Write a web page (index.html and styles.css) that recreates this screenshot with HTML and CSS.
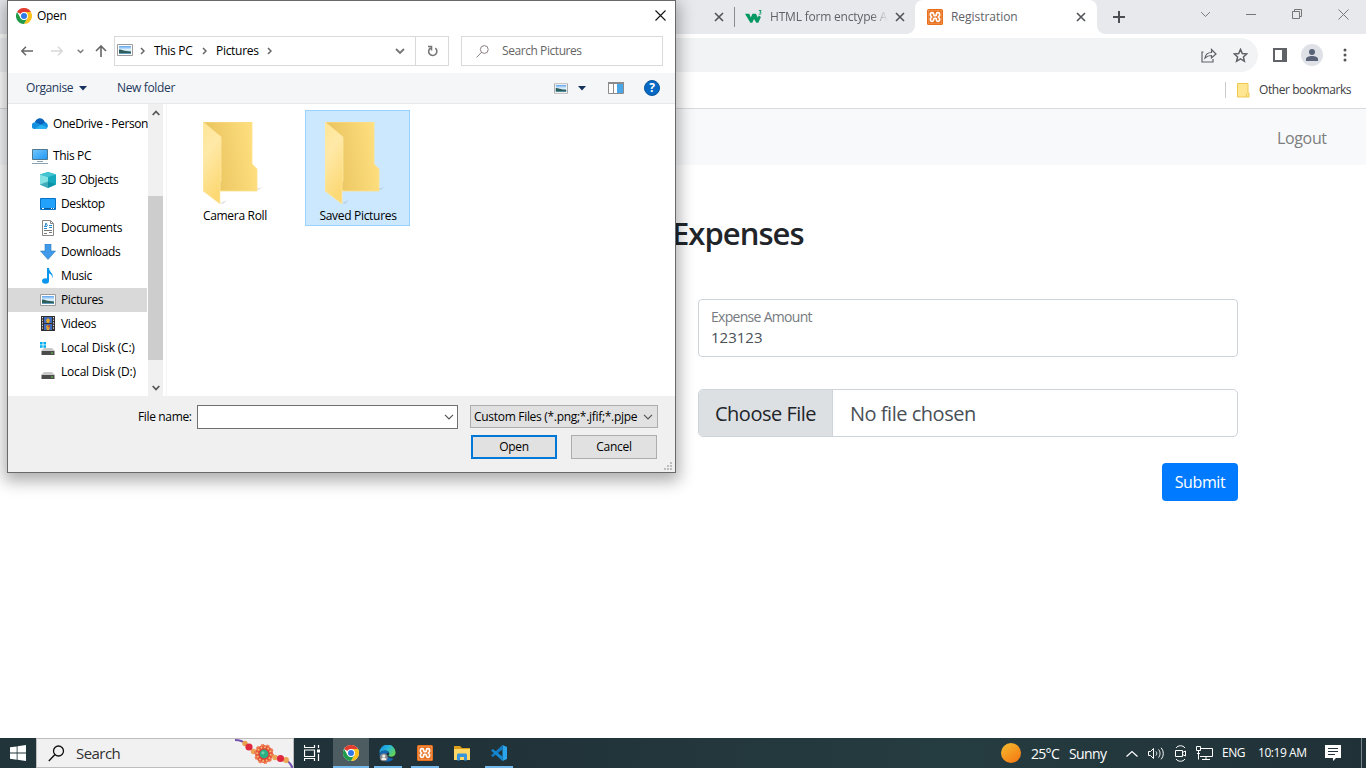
FILE: index.html
```html
<!DOCTYPE html>
<html lang="en">
<head>
<meta charset="utf-8">
<title>Registration</title>
<link rel="stylesheet" href="styles.css">
</head>
<body>
<svg class="defs" width="0" height="0">
  <defs>
    <linearGradient id="sky" x1="0" y1="0" x2="0" y2="1"><stop offset="0" stop-color="#5aa4ee"/><stop offset=".45" stop-color="#e4f1fd"/><stop offset=".7" stop-color="#b9dcf5"/><stop offset="1" stop-color="#4a86ad"/></linearGradient>
    <linearGradient id="fback" x1=".2" y1=".6" x2="1" y2=".45"><stop offset="0" stop-color="#ebc762"/><stop offset="1" stop-color="#ffdf80"/></linearGradient>
    <linearGradient id="ffront" x1="0" y1="0" x2=".3" y2="1"><stop offset="0" stop-color="#ffe596"/><stop offset=".4" stop-color="#ffe9a8"/><stop offset="1" stop-color="#fcd975"/></linearGradient>
    <linearGradient id="sun" x1="0" y1="0" x2=".7" y2="1"><stop offset="0" stop-color="#f6bd31"/><stop offset="1" stop-color="#f57c14"/></linearGradient>
    <linearGradient id="blue" x1="0" y1="0" x2="1" y2="1"><stop offset="0" stop-color="#74c8ff"/><stop offset="1" stop-color="#1c96f5"/></linearGradient>
    <linearGradient id="edge" x1="0" y1="0" x2="1" y2=".6"><stop offset="0" stop-color="#1688d8"/><stop offset=".5" stop-color="#27b4df"/><stop offset="1" stop-color="#62d45a"/></linearGradient>
  </defs>
  <symbol id="chrome" viewBox="0 0 16 16">
    <circle cx="8" cy="8" r="8" fill="#fff"/>
    <path d="M8 8 1.070 4A8 8 0 0 1 14.930 4H8z" fill="#e33b2e"/>
    <path d="M14.930 4A8 8 0 0 1 8 16l3.460-6L8 4z" fill="#fcc21b"/>
    <path d="M8 16A8 8 0 0 1 1.070 4L4.540 10 8 12l3.400-2z" fill="#229a4b"/>
    <circle cx="8" cy="8" r="3.900" fill="#fff"/><circle cx="8" cy="8" r="3" fill="#2f78e8"/>
  </symbol>
  <symbol id="picture" viewBox="0 0 16 12">
    <path d="M.5.5h15v11H.5z" fill="#fff" stroke="#9b9b9b"/><path d="M2 2h12v8H2z" fill="url(#sky)"/><path d="M2 5.500c3 0 5 1.800 12 2V9H2z" fill="#2e5e59"/>
  </symbol>
  <symbol id="xampp" viewBox="0 0 16 16">
    <rect width="16" height="16" rx="1.500" fill="#e8701d"/>
    <rect x="1.300" y="1.300" width="13.400" height="13.400" fill="none" stroke="#f19a5c" stroke-width=".6"/>
    <path d="M6.600 5.600V5a1.300 1.300 0 0 0-1.300-1.300h-.6A1.300 1.300 0 0 0 3.400 5v1.400L4.600 8 3.400 9.600V11a1.300 1.300 0 0 0 1.300 1.300h.6A1.300 1.300 0 0 0 6.600 11v-1l.6-.6h1.600l.6.6v1a1.300 1.300 0 0 0 1.300 1.300h.6a1.300 1.300 0 0 0 1.300-1.300V9.600L11.400 8l1.200-1.600V5a1.300 1.300 0 0 0-1.300-1.300h-.6A1.300 1.300 0 0 0 9.400 5v1l-.6.600H7.200z" fill="none" stroke="#fff" stroke-width="1.700"/>
  </symbol>
  <symbol id="folder" viewBox="0 0 60 84">
    <path d="M52 67 60 65 53 69zM17 81l7-3-4 4z" fill="#8a8a8a" opacity=".25"/>
    <path d="M0 0h49v42l5 5v22H17L0 1z" fill="url(#fback)" stroke="#ffe28b" stroke-width=".8"/>
    <path d="M0 0 18 15v43l-1 3v21L0 69z" fill="url(#ffront)" stroke="#ffe9a8" stroke-width=".7"/>
  </symbol>
  <symbol id="disk" viewBox="0 0 16 16">
    <path d="M4 8h8l3 3H1z" fill="#c9c9c9"/><path d="M1.500 11h13v4h-13z" fill="#4b4b4b"/><path d="M11 13h2" stroke="#65d94a"/>
  </symbol>
  <symbol id="x" viewBox="0 0 10 10"><path d="m1 1 8 8M9 1 1 9" fill="none" stroke="currentColor" stroke-width="1.600"/></symbol>
  <symbol id="down" viewBox="0 0 10 6"><path d="m1 .8 4 4 4-4" fill="none" stroke="currentColor" stroke-width="var(--w,1.2)"/></symbol>
  <symbol id="right" viewBox="0 0 5 8"><path d="m1 1 3 3-3 3" fill="none" stroke="#666" stroke-width="1.500"/></symbol>
</svg>

<div class="desktop">
  <div class="browser">
    <header class="tabstrip">
      <div class="tab tab-first"><svg class="tab-x"><use href="#x"/></svg></div>
      <div class="tab tab-w3">
        <svg class="w3-icon" viewBox="0 0 16 16"><path d="M0 4.500h4l1.500 3.500L7 4.500h3.300L12 8l1-2 2 1.500-2.500 5.500h-1.800L8.500 9.500 6.800 13H5z" fill="#059862"/><path d="M13 1.500h2.200L14 3c2 .2 1.300 2.600-1 1.700" fill="none" stroke="#059862" stroke-width=".9"/></svg>
        <span class="tab-title fade">HTML form enctype A</span><svg class="tab-x"><use href="#x"/></svg>
      </div>
      <div class="tab tab-active"><svg class="tab-icon"><use href="#xampp"/></svg><span class="tab-title">Registration</span><svg class="tab-x"><use href="#x"/></svg></div>
      <div class="newtab"><svg width="12" height="12"><path d="M6 0v12M0 6h12" stroke="#4b4e52" stroke-width="2"/></svg></div>
      <div class="controls">
        <span><svg width="11" height="7" viewBox="0 0 10 6"><use href="#down"/></svg></span>
        <span><svg width="10" height="10"><path d="M0 5.500h10" stroke="#777"/></svg></span>
        <span><svg width="11" height="11"><path d="M.5 2.500h7v7h-7zM2.500 2.500v-2h7v7h-2" fill="none" stroke="#777"/></svg></span>
        <span><svg width="11" height="11" viewBox="0 0 11 11"><path d="m.5.5 10 10M10.500.5l-10 10" stroke="#777"/></svg></span>
      </div>
    </header>
    <div class="toolbar">
      <div class="omnibox">
        <svg width="16" height="15" viewBox="0 0 16 15"><path d="M2.500 4H1v10h11v-3M4 10c.5-3.500 3-5.500 6.500-5.500V1.500L15 6l-4.500 4V7.500C8 7.500 6 8 4 10z" fill="none" stroke="#5f6368" stroke-width="1.200"/></svg>
        <svg width="15" height="15" viewBox="0 0 15 15"><path d="m7.500 1.400 1.800 4.100 4.500.4-3.400 3 1 4.400-3.900-2.400-3.900 2.400 1-4.400-3.400-3 4.500-.4z" fill="none" stroke="#5f6368" stroke-width="1.500"/></svg>
      </div>
      <svg class="panel" width="14" height="14"><path d="M1 1h12v12H1z" fill="#fff" stroke="#5f6368" stroke-width="2"/><path d="M9 0h5v14H9z" fill="#5f6368"/></svg>
      <svg class="avatar" width="22" height="22"><circle cx="11" cy="11" r="11" fill="#dee1e6"/><circle cx="11" cy="8" r="3" fill="#5a6377"/><path d="M5 17v-2c0-4 12-4 12 0v2z" fill="#5a6377"/></svg>
      <svg class="dots" width="4" height="14"><circle cx="2" cy="2" r="1.500" fill="#555"/><circle cx="2" cy="7" r="1.500" fill="#555"/><circle cx="2" cy="12" r="1.500" fill="#555"/></svg>
    </div>
    <div class="bookmarks">
      <svg width="13" height="15"><path d="M.5.5h10.500v9.500h1v4H.5z" fill="#ffe693" stroke="#efc94e"/><path d="M9.500 14v-3.500" stroke="#efc94e"/></svg><span>Other bookmarks</span>
    </div>
    <main class="page">
      <nav class="nav"><span>Logout</span></nav>
      <h1>Expenses</h1>
      <form class="form">
        <div class="amount"><label>Expense Amount</label><span>123123</span></div>
        <div class="file"><span class="choose">Choose File</span><span class="nofile">No file chosen</span></div>
        <button class="submit" type="button"><span>Submit</span></button>
      </form>
    </main>
  </div>

  <footer class="taskbar">
    <div class="start"><svg width="16" height="16"><path d="m0 2.300 6.700-.9v6.200H0zm7.500-1L16 0v7.600H7.500zM0 8.400h6.700v6.300L0 13.700zm7.500 0H16V16l-8.500-1.200z" fill="#fff"/></svg></div>
    <div class="tasksearch">
      <svg width="17" height="17" viewBox="0 0 17 17"><circle cx="10.500" cy="6" r="5" fill="none" stroke="#111" stroke-width="1.300"/><path d="M7 9.500.8 16" stroke="#111" stroke-width="1.400"/></svg>
      <span class="searchlabel">Search</span>
      <svg class="rakhi" width="58" height="29" viewBox="0 0 58 29"><path d="M0 1c5 0 8 1 11 4M50 21c4 1 6 4 7.500 8" fill="none" stroke="#7653ae" stroke-width="2"/><circle cx="10" cy="4.500" r="2.700" fill="#e8a04e"/><circle cx="18.500" cy="12.500" r="2.700" fill="#eba553"/><circle cx="14" cy="8" r="3.600" fill="#e0283f"/><circle cx="29" cy="15" r="9" fill="#e8573e"/><circle cx="29" cy="15" r="9" fill="none" stroke="#ef7b50" stroke-width="2" stroke-dasharray="3 2.600"/><circle cx="29" cy="15" r="6.800" fill="none" stroke="#f4c06e" stroke-width="1.800" stroke-dasharray="1.600 1.950"/><circle cx="29" cy="15" r="5.500" fill="#dc3e38"/><circle cx="29" cy="15" r="4.400" fill="#2aae84"/><circle cx="28" cy="13.800" r="1.600" fill="#6ed2ab"/><circle cx="40" cy="18.500" r="2.700" fill="#eba553"/><circle cx="51" cy="21" r="2.900" fill="#eba553"/><circle cx="45.500" cy="19.500" r="3.600" fill="#e0283f"/></svg>
    </div>
    <div class="task plain"><svg width="17" height="16" viewBox="0 0 17 16"><path d="M.5 0v2.500h10V0M.5 5h10v6.500H.5zM.5 16v-2.500h10V16M14.500 0v3M14.500 9v7" fill="none" stroke="#fff" stroke-width="1.200"/><path d="M13 4.500h3v3h-3z" fill="#fff"/></svg></div>
    <div class="task active"><svg class="i16"><use href="#chrome"/></svg></div>
    <div class="task open"><svg width="17" height="17" viewBox="0 0 17 17"><path d="M.5 8A8 8 0 0 1 16.500 7c.5 4-3.500 5.500-6.500 4.300-1.500-.8.500-1.300.3-3C10 5 4 4 .5 8z" fill="url(#edge)"/><path d="M.5 8.500C3 4.500 8.500 4.500 10.300 7.800 6 7 5.500 13 14.500 13.700 10 19 0 17 .5 8.500z" fill="#1467b3"/><circle cx="4.800" cy="12.300" r="3.900" fill="#8b8b8b"/><circle cx="4.800" cy="11" r="1.600" fill="#eee"/><path d="M2.300 15c0-3.200 5-3.200 5 0z" fill="#eee"/></svg></div>
    <div class="task open"><svg class="i16"><use href="#xampp"/></svg></div>
    <div class="task"><svg width="16" height="15"><path d="M0 0h6l2 2h8v4H0z" fill="#dc9d1a"/><path d="M0 3h16v11H0z" fill="#ffd766"/><path d="M3 14.500V8.500l1-1h8l1 1v6h-3V11H6v3.500z" fill="#3794dd"/></svg></div>
    <div class="task open"><svg width="16" height="16" viewBox="0 0 16 16"><path d="m11.500 0 4.500 2v12l-4.500 2z" fill="#2aa5ed"/><path d="M11.500 0v4.500L1.800 12 0 10.500z" fill="#127bc1"/><path d="m0 5.500 1.800-1.500 9.700 7.500V16z" fill="#1688d1"/></svg></div>
    <div class="tray">
      <svg class="sun" width="20" height="20"><circle cx="10" cy="10" r="10" fill="url(#sun)"/></svg>
      <span class="temp">25°C</span><span class="sunny">Sunny</span>
      <svg class="chev" width="12" height="7" viewBox="0 0 12 7"><path d="m.5 6.500 5.500-5 5.500 5" fill="none" stroke="#fff" stroke-width="1.200"/></svg>
      <svg class="vol" width="17" height="13" viewBox="0 0 17 13"><path d="M.5 4.500h2l3-3v10l-3-3h-2zM8 4.500c1 1 1 3 0 4M10.500 2.500c2 2 2 6 0 8M13 .8c3 3 3 8.500 0 11.500" fill="none" stroke="#fff"/></svg>
      <svg class="cam" width="12" height="17" viewBox="0 0 12 17"><path d="M1 3c2-3 7-3 9 0M1 14c2 3 7 3 9 0M.5 5.500h7v6h-7zM7.500 7.500l3-1.500v5l-3-1.500" fill="none" stroke="#fff"/></svg>
      <svg class="net" width="17" height="14" viewBox="0 0 17 14"><path d="M5 2.500h11.500v8H4M10 10.500v3M6 13.500h8M.5.5h4v4h-4zM2.500 4.500v9M1 7.500h3" fill="none" stroke="#fff"/></svg>
      <span class="lang">ENG</span><span class="clock">10:19 AM</span>
      <svg class="note" width="16" height="16"><path d="M0 0h16v13h-5l-3 3v-3H0z" fill="#fff"/><path d="M3 3.500h10M3 6.500h10M3 9.500h7" stroke="#21323a"/></svg>
      <i class="peek"></i>
    </div>
  </footer>

  <section class="dialog">
    <div class="titlebar"><svg class="i16"><use href="#chrome"/></svg><span>Open</span><svg class="close" width="11" height="11"><path d="m.5.5 10 10M10.500.5l-10 10" stroke="#111" stroke-width="1.100"/></svg></div>
    <div class="address">
      <div class="arrows">
        <svg width="12" height="10" viewBox="0 0 12 10"><path d="M12 5H1M5 .8.800 5 5 9.200" fill="none" stroke="#666" stroke-width="1.500"/></svg>
        <svg width="12" height="10" viewBox="0 0 12 10"><path d="M0 5h11M7 .8 11.200 5 7 9.200" fill="none" stroke="#d8d8d8" stroke-width="1.500"/></svg>
        <svg width="7" height="5" viewBox="0 0 7 5"><path d="m.7.8 2.800 2.700L6.300.8" fill="none" stroke="#777" stroke-width="1.400"/></svg>
        <svg width="12" height="12" viewBox="0 0 12 12"><path d="M6 12V1M1 6l5-5 5 5" fill="none" stroke="#666" stroke-width="1.600"/></svg>
      </div>
      <div class="crumbs">
        <svg class="crumbpic" width="16" height="12"><use href="#picture"/></svg><svg class="sep"><use href="#right"/></svg><span class="c1">This PC</span><svg class="sep"><use href="#right"/></svg><span class="c2">Pictures</span><svg class="sep"><use href="#right"/></svg>
        <svg class="drop" width="10" height="7" viewBox="0 0 10 7"><path d="m1 1 4 4 4-4" fill="none" stroke="#777" stroke-width="1.900"/></svg>
        <div class="refresh"><svg width="11" height="12" viewBox="0 0 11 12"><path d="M8.300 3.200A4.100 4.100 0 1 1 3.500 3M1 1.500h3.500V5.500" fill="none" stroke="#777" stroke-width="1.600"/></svg></div>
      </div>
      <div class="find"><svg width="13" height="13" viewBox="0 0 13 13"><circle cx="8.300" cy="4.500" r="3.900" fill="none" stroke="#8c8083"/><path d="m5.500 7.300-5 5.200" stroke="#8c8083"/></svg><span>Search Pictures</span></div>
    </div>
    <div class="commands">
      <span class="organise">Organise</span><svg class="tri" width="8" height="5"><path d="M0 0h8L4 4.500z" fill="#16325c"/></svg><span class="newfolder">New folder</span>
      <svg class="view" width="14" height="11" viewBox="0 0 16 12"><use href="#picture"/></svg><svg class="tri2" width="8" height="5"><path d="M0 0h8L4 4.500z" fill="#16325c"/></svg>
      <svg class="preview" width="16" height="12"><path d="M.5.5h15v11H.5zM5.500 2v9" fill="#fff" stroke="#8b8b8b"/><path d="M0 0h16v2H0z" fill="#8b8b8b"/><path d="M9 2h6v9H9z" fill="#49a6e8"/></svg>
      <span class="help"><b>?</b></span>
    </div>
    <div class="content">
      <div class="tree">
        <div class="item top"><svg width="16" height="16"><path d="M2 14a3.500 3.500 0 0 1 1-6.800C5 3 10 2 12 7c5 0 5 7 1 7z" fill="#1490df"/><path d="M3 7c2-5 8-5 10 .3L9 10 4.500 7.500z" fill="#0b62ba"/><path d="m3 14 6-4.500 6 3c-.5 1-1 1.500-2 1.500z" fill="#2bb2f2"/></svg><span>OneDrive - Person</span></div>
        <div class="item pc"><svg width="16" height="16"><path d="M.5 1.500h15v10H.5z" fill="url(#blue)" stroke="#51788e"/><path d="M5 13.500h6M0 15.500h16" stroke="#8aa1ae"/></svg><span>This PC</span></div>
        <div class="item"><svg width="16" height="16"><path d="m8 0 8 2.500v10L8 16l-8-3.500v-10z" fill="#16a9bd"/><path d="M0 2.500 8 5v11l-8-3.500z" fill="#85e2e4"/><path d="m0 2.500 8-2.500 8 2.500L8 5z" fill="#42c5d2"/><path d="m0 12.500 8-3 8 3L8 16z" fill="#087d96" opacity=".55"/></svg><span>3D Objects</span></div>
        <div class="item"><svg width="16" height="16"><path d="M.5 2.500h15v11H.5z" fill="#22a2fa" stroke="#0873c4"/><path d="M1 12.500h14" stroke="#075c9e"/><path d="M2 12.500h2M11 12.500h1M13 12.500h1" stroke="#fff"/></svg><span>Desktop</span></div>
        <div class="item"><svg width="16" height="16"><path d="M2.500.5h8l3 3v12h-11z" fill="#fff" stroke="#888"/><path d="M10.500.5v3h3" fill="none" stroke="#888"/><path d="M4 6.500h3M9 5.500h3M4 8.500h3M9 7.500h3" stroke="#278bd0"/><path d="m5 6 1-3 1.500 3" fill="none" stroke="#278bd0"/><path d="M4 10.500h8M4 13.500h3M9 12.500h3" stroke="#777"/></svg><span>Documents</span></div>
        <div class="item"><svg width="16" height="16"><path d="M5 0h6v7h4.500L8 15.500.5 7H5z" fill="#3f9bea" stroke="#2f78bb" stroke-width=".6"/></svg><span>Downloads</span></div>
        <div class="item"><svg width="16" height="16"><ellipse cx="5.500" cy="13" rx="3.500" ry="2.700" fill="#0a95ef"/><path d="M7 0h2c0 4 5 5 3.500 10.500C12 7 11 6 9 5.500V13H7z" fill="#0a95ef"/></svg><span>Music</span></div>
        <div class="item selected"><svg width="16" height="12"><use href="#picture"/></svg><span>Pictures</span></div>
        <div class="item"><svg width="16" height="16"><path d="M1 0h14v15H1z" fill="#303030"/><path d="M4 1h8v6H4z" fill="#426abd"/><path d="M4 8h8v6H4z" fill="#426abd"/><path d="m6 4 2-2 2 2-1 3H7zM6 10l2-1 2 2-1 3H7z" fill="#e6a82c"/><path d="m7 10 3-1v3z" fill="#b14e35"/><path d="M2.500 1v13M13.500 1v13" stroke="#e0e0e0" stroke-dasharray="1.300 1.300"/></svg><span>Videos</span></div>
        <div class="item disk"><svg width="16" height="16"><use href="#disk"/><path d="M0 2h2.600v2.500H0zm3.400 0h2.600v2.500H3.400zM0 5.300h2.600v2.500H0zm3.400 0h2.600v2.500H3.400z" fill="#00adef"/></svg><span>Local Disk (C:)</span></div>
        <div class="item disk"><svg width="16" height="16"><use href="#disk"/></svg><span>Local Disk (D:)</span></div>
      </div>
      <div class="scroll"><svg width="8" height="6" viewBox="0 0 8 6"><path d="m.7 5 3.300-3.500L7.300 5" fill="none" stroke="#555" stroke-width="1.800"/></svg><i class="thumb"></i><svg width="8" height="6" viewBox="0 0 8 6"><path d="m.7 1 3.300 3.500L7.300 1" fill="none" stroke="#555" stroke-width="1.800"/></svg></div>
      <div class="files">
        <div class="tile"><svg width="60" height="84"><use href="#folder"/></svg><span>Camera Roll</span></div>
        <div class="tile chosen"><svg width="60" height="84"><use href="#folder"/></svg><span>Saved Pictures</span></div>
      </div>
    </div>
    <div class="bottom">
      <div class="namerow"><span class="fname">File name:</span><div class="nameinput"><svg width="10" height="6"><use href="#down"/></svg></div><div class="type"><span>Custom Files (*.png;*.jfif;*.pjpe</span><svg width="10" height="6"><use href="#down"/></svg></div></div>
      <div class="buttons"><div class="btn primary"><span>Open</span></div><div class="btn"><span>Cancel</span></div></div>
      <svg class="grip" width="8" height="8"><path d="M6 0h2v2H6zM3 3h2v2H3zM6 3h2v2H6zM0 6h2v2H0zM3 6h2v2H3zM6 6h2v2H6z" fill="#bdbdbd"/></svg>
    </div>
  </section>
</div>
</body>
</html>
```
FILE: styles.css
```css
* { box-sizing: border-box; }
body { margin: 0; overflow: hidden; font-family: "Open Sans", "Noto Sans", sans-serif; font-size: 12px; color: #000; }
svg { display: block; flex: none; }
span { white-space: nowrap; }
.defs { position: absolute; }
.i16 { width: 16px; height: 16px; }
.desktop { position: relative; width: 1366px; height: 768px; display: flex; flex-direction: column; }
.browser { height: 738px; display: flex; flex-direction: column; background: #fff; }

/* Browser frame */
.tabstrip { height: 34px; background: #e8e9ed; display: flex; justify-content: flex-end; color: #5f6368; }
.tab { height: 34px; display: flex; align-items: center; }
.tab .tab-x { width: 10px; height: 10px; color: #505357; }
.tab-first { width: 179px; justify-content: flex-end; padding-right: 10px; }
.tab-w3 { width: 181px; padding-left: 11px; position: relative; }
.tab-w3::before { content: ""; position: absolute; left: 0; top: 7px; width: 1px; height: 20px; background: #888b90; }
.w3-icon { width: 17px; height: 17px; margin-right: 8px; }
.tab-title { width: 118px; letter-spacing: -.04px; padding-bottom: 1px; }
.fade { mask-image: linear-gradient(90deg, #000 86%, transparent); margin-right: 7px; letter-spacing: -.2px; }
.tab-active { width: 182px; background: #fff; border-radius: 8px 8px 0 0; padding-left: 12px; position: relative; }
.tab-active::before, .tab-active::after { content: ""; position: absolute; bottom: 0; width: 8px; height: 8px; }
.tab-active::before { left: -8px; background: radial-gradient(circle at 0 0, transparent 7.5px, #fff 8px); }
.tab-active::after { right: -8px; background: radial-gradient(circle at 100% 0, transparent 7.5px, #fff 8px); }
.tab-icon { width: 16px; height: 16px; margin-right: 8px; }
.tab-active .tab-title { width: 125px; }
.newtab { width: 85px; display: flex; align-items: center; padding-left: 16px; }
.controls { display: flex; color: #777; height: 28px; }
.controls span { width: 46px; display: grid; place-items: center; --w: .9; }
.toolbar { height: 38px; display: flex; align-items: center; padding-top: 4px; }
.omnibox { width: 1258px; height: 34px; background: #f1f3f4; border-radius: 0 17px 17px 0; display: flex; align-items: center; justify-content: flex-end; gap: 16px; padding-right: 10px; }
.panel { margin-left: 15px; }
.avatar { margin-left: 14px; }
.dots { margin-left: 19.5px; }
.bookmarks { height: 37px; border-bottom: 1px solid #d9dbdf; display: flex; align-items: center; justify-content: flex-end; color: #3c4043; padding-right: 14px; }
.bookmarks svg { margin-right: 9px; }
.bookmarks::before { content: ""; width: 1px; height: 16px; margin-right: 11px; background: #c8cacd; }
.bookmarks span { width: 93px; letter-spacing: -.43px; padding-bottom: 1px; }

/* Web page */
.page { display: flex; flex-direction: column; }
.nav { height: 56px; background: #f8f9fb; display: flex; align-items: center; justify-content: flex-end; padding-right: 39px; font-size: 16px; color: #7c7d7f; }
.nav span { width: 50px; letter-spacing: -.35px; padding-top: 1px; }
h1 { margin: 45px 0 0 672px; font-size: 31px; font-weight: 600; line-height: 46px; letter-spacing: -.97px; color: #212529; }
.form { margin: 43px 128px 0 698px; display: flex; flex-direction: column; }
.amount { height: 58px; border: 1px solid #ced4da; border-radius: 4px; padding: 7px 12px; display: flex; flex-direction: column; color: #495057; font-size: 15px; }
.amount label { font-size: 14px; line-height: 19px; letter-spacing: -.7px; color: #777b80; }
.amount span { line-height: 22px; letter-spacing: 0; }
.file { margin-top: 32px; height: 48px; border: 1px solid #ced4da; border-radius: 5px; display: flex; align-items: center; overflow: hidden; font-size: 20px; }
.choose { width: 134px; height: 46px; line-height: 47px; background: #dde0e3; border-right: 1px solid #ced4da; padding-left: 16px; color: #212529; letter-spacing: -.5px; }
.nofile { margin-left: 17px; color: #495057; letter-spacing: -.48px; }
.submit { align-self: flex-end; margin-top: 26px; width: 76px; height: 38px; border: 0; border-radius: 4px; background: #007bff; color: #fff; font: 16px "Open Sans", sans-serif; padding: 0; letter-spacing: -.4px; }

/* File dialog */
.dialog { position: absolute; left: 7px; top: 0; width: 669px; height: 473px; background: #fff; border: 1px solid #696969; box-shadow: 0 5px 15px 3px rgba(0,0,0,.32); display: flex; flex-direction: column; letter-spacing: -.3px; }
.titlebar { height: 30px; display: flex; align-items: center; padding: 0 9px 1px 8px; }
.titlebar span { margin-left: 5px; }
.close { margin-left: auto; }
.address { height: 42px; display: flex; align-items: center; padding: 5px 12px 7px 0; }
.arrows { width: 106px; display: flex; align-items: center; padding-left: 13px; }
.arrows svg:nth-child(2) { margin-left: 18px; }
.arrows svg:nth-child(3) { margin-left: 14px; }
.arrows svg:nth-child(4) { margin-left: 11px; }
.crumbs { width: 335px; height: 30px; border: 1px solid #d9d9d9; display: flex; align-items: center; padding-left: 2px; }
.crumbs span, .find span { padding-bottom: 1px; }
.crumbpic { margin-bottom: 2px; }
.sep { width: 5px; height: 8px; margin: 0 9px 0 7px; }
.c1 { width: 39px; } .c2 { width: 43px; }
.c1 + .sep { margin-left: 9px; margin-right: 9px; }
.c2 + .sep { margin-left: 8px; }
.drop { margin-left: auto; }
.refresh { width: 33px; height: 28px; margin-left: 10px; border-left: 1px solid #d9d9d9; display: grid; place-items: center; }
.find { width: 202px; height: 30px; margin-left: 12px; border: 1px solid #d9d9d9; display: flex; align-items: center; padding-left: 14px; color: #666; }
.find span { margin-left: 13px; letter-spacing: -.43px; }
.commands { height: 31px; background: #f5f6f8; border-bottom: 1px solid #e7e9ec; display: flex; align-items: center; padding-left: 18px; color: #1e395b; }
.organise { width: 48px; padding-bottom: 1px; letter-spacing: -.4px; } .tri { margin-left: 5px; }
.newfolder { width: 58px; margin-left: 30px; letter-spacing: -.35px; padding-bottom: 1px; }
.view { margin-left: 379px; } .tri2 { margin-left: 10px; } .preview { margin-left: 22px; }
.help { width: 16px; height: 16px; border-radius: 50%; margin-left: 20px; background: #0869c4; border: 1px solid #07559b; color: #fff; display: grid; place-items: center; line-height: 14px; font-size: 12px; letter-spacing: 0; }
.content { height: 292px; display: flex; }
.tree { width: 139px; padding-top: 8px; }
.item { height: 24px; display: flex; align-items: center; padding-left: 32px; gap: 5px; }
.item span { letter-spacing: -.35px; padding-bottom: 1px; }
.top, .pc { padding-left: 24px; } .pc { margin-top: 8px; }
.top svg { margin-bottom: 2px; }
.top span { letter-spacing: -.42px; }
.disk span { letter-spacing: -.2px; }
.selected { background: #d9d9d9; }
.scroll { width: 15px; margin-left: 1px; background: #f0f0f0; display: flex; flex-direction: column; align-items: center; padding: 6px 0 5px; }
.thumb { width: 15px; height: 164px; background: #cdcdcd; margin: 80px 0 25px; }
.files { flex: 1; margin-left: 3px; border-left: 1px solid #f5f5f5; display: flex; padding: 6px 0 0 15px; gap: 17px; }
.tile { width: 105px; height: 116px; border: 1px solid transparent; display: flex; flex-direction: column; align-items: center; padding-top: 10px; }
.tile svg { overflow: visible; margin: 1px 4px 0 0; }
.tile span { line-height: 20px; letter-spacing: -.3px; padding-left: 1px; }
.chosen { background: #cce8ff; border-color: #99d1ff; margin-left: 1px; }
.chosen svg { margin-right: 5px; }
.bottom { height: 76px; background: #f0f0f0; padding: 9px 18px 0 130px; position: relative; }
.namerow { display: flex; align-items: flex-start; height: 30px; line-height: 23px; margin-right: -1px; }
.fname { width: 59px; flex: none; letter-spacing: -.35px; }
.nameinput { width: 261px; height: 24px; border: 1px solid #707070; background: #fff; display: flex; flex: none; align-items: center; justify-content: flex-end; padding-right: 3px; color: #555; }
.type { width: 188px; height: 23px; flex: none; border: 1px solid #adadad; background: #e1e1e1; margin-left: 12px; display: flex; align-items: center; padding: 0 4px 0 3px; }
.type span { width: 164px; margin-right: auto; letter-spacing: -.3px; }
.type svg { color: #555; }
.buttons { display: flex; justify-content: flex-end; gap: 14px; }
.btn { width: 86px; height: 24px; border: 1px solid #adadad; background: #e1e1e1; display: grid; place-items: center; padding-bottom: 1px; }
.primary { border: 2px solid #0078d7; }
.grip { position: absolute; right: 3px; bottom: 2px; }

/* Taskbar */
.taskbar { height: 30px; background: linear-gradient(90deg, #20343a, #213239 35%, #253c40 70%, #203137); display: flex; color: #fff; }
.start { width: 36px; display: grid; place-items: center; }
.tasksearch { width: 258px; background: #f1f1f1; border: 1px solid #bdbdbd; display: flex; align-items: center; padding-left: 11px; }
.searchlabel { font-size: 15px; margin-left: 11px; color: #303030; letter-spacing: -.55px; }
.rakhi { margin-left: auto; }
.task { width: 37px; display: grid; place-items: center; position: relative; }
.task.open { padding-right: 1px; }
.task svg { margin-right: 1px; }
.plain { width: 39px; padding-right: 1px; }
.active { width: 36px; background: #4d5c60; margin-right: 1px; }
.active::after { content: ""; position: absolute; left: 0; bottom: 0; width: 36px; height: 2px; background: #76b9ed; }
.active svg { margin-right: 0; }
.open::after { content: ""; position: absolute; left: 4px; bottom: 0; width: 28px; height: 2px; background: #76b9ed; }
.tray { margin-left: auto; width: 365px; display: flex; align-items: center; }
.temp { font-size: 14px; width: 29px; margin-left: 10px; letter-spacing: -.7px; }
.sunny { font-size: 14px; width: 39px; margin-left: 9px; letter-spacing: -.6px; }
.chev { margin-left: 18px; } .vol { margin-left: 10px; } .cam { margin-left: 10px; } .net { margin-left: 9px; }
.lang { width: 24px; margin-left: 9px; letter-spacing: -.5px; padding-bottom: 1px; }
.clock { width: 50px; margin-left: 12px; letter-spacing: -.45px; padding-bottom: 1px; }
.note { margin-left: 17px; }
.peek { width: 1px; height: 30px; background: #76858a; margin-left: 20px; }
```
